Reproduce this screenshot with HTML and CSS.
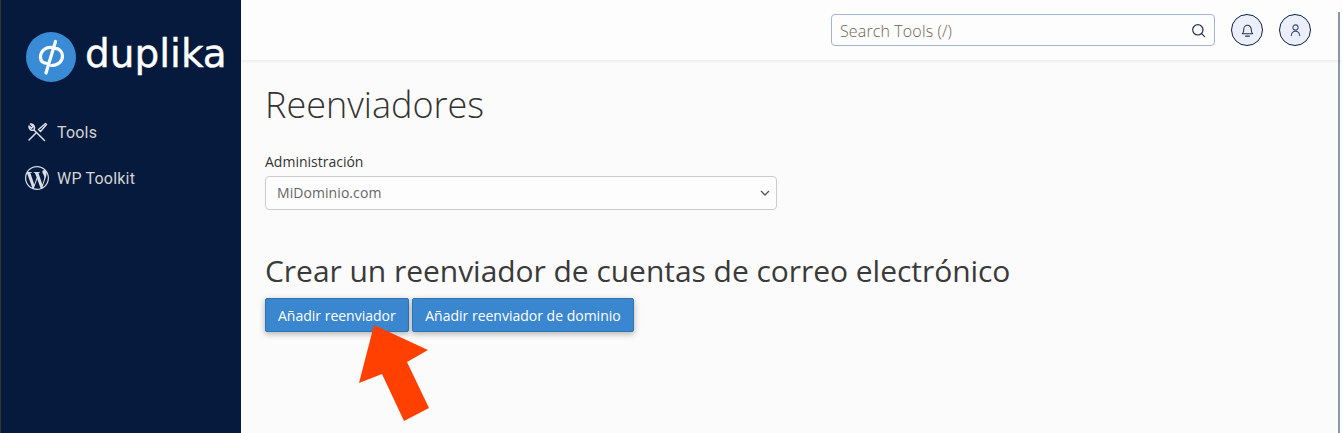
FILE: index.html
```html
<!DOCTYPE html>
<html lang="es">
<head>
  <meta charset="UTF-8" />
  <title>Reenviadores</title>
  <link rel="stylesheet" href="styles.css">
</head>
<body>
  <aside class="sidebar">
    <div class="logo">
      <svg class="logo-mark" viewBox="0 0 50 50" width="50" height="50">
        <circle cx="25" cy="25" r="25" fill="#3a8bd6"/>
        <path d="M26 15.500C19 14.500 14.500 19.500 14.500 25c0 4 2.500 6.500 7.500 6.500M28 16.500c5-.5 8.500 3 8.500 7.500 0 5.500-4.500 9.500-11 9.500" fill="none" stroke="#fff" stroke-width="3.200" stroke-linecap="round"/>
        <path d="M29.500 9.500 20 41" fill="none" stroke="#fff" stroke-width="3.200" stroke-linecap="round"/>
      </svg>
      <span class="logo-text">duplika</span>
    </div>
    <nav class="side-nav">
      <a href="#" class="side-link">
        <svg class="side-icon" viewBox="0 0 24 24" width="24" height="24" fill="none" stroke="#d8dde6" stroke-width="1.500" stroke-linecap="round" stroke-linejoin="round">
          <path d="M19.500 20.500 9.500 10.500"/>
          <path d="M4 6C3.500 8.500 6 11 9 10.200 10.500 7 8.500 3.500 5.500 4L8 6.800 6.500 8.200z"/>
          <path d="M20.500 3.500l1 1-6 7-2-2z"/>
          <path d="M11 13 4 20"/>
        </svg>
        <span>Tools</span>
      </a>
      <a href="#" class="side-link">
        <svg class="side-icon" viewBox="0 0 24 24" width="24" height="24" fill="#d8dde6">
          <path d="M21.469 6.825c.84 1.537 1.318 3.3 1.318 5.175 0 3.979-2.156 7.456-5.363 9.325l3.295-9.527c.615-1.54.82-2.771.82-3.864 0-.405-.026-.78-.07-1.11m-7.981.105c.647-.03 1.232-.105 1.232-.105.582-.075.514-.93-.067-.899 0 0-1.755.135-2.88.135-1.064 0-2.85-.15-2.85-.15-.585-.03-.661.855-.075.885 0 0 .54.061 1.125.09l1.68 4.605-2.37 7.08L5.354 6.9c.649-.03 1.234-.1 1.234-.1.585-.075.516-.93-.065-.896 0 0-1.746.138-2.874.138-.2 0-.438-.008-.69-.015C4.911 3.15 8.235 1.215 12 1.215c2.809 0 5.365 1.072 7.286 2.833-.046-.003-.091-.009-.141-.009-1.06 0-1.812.923-1.812 1.914 0 .89.513 1.643 1.06 2.531.411.72.89 1.643.89 2.977 0 .915-.354 1.994-.821 3.479l-1.075 3.585-3.9-11.61.001.014zM12 22.784c-1.059 0-2.081-.153-3.048-.437l3.237-9.406 3.315 9.087c.024.053.05.101.078.149-1.12.393-2.325.609-3.582.609M1.211 12c0-1.564.336-3.05.935-4.39L7.29 21.709C3.694 19.96 1.212 16.271 1.211 12M12 0C5.385 0 0 5.385 0 12s5.385 12 12 12 12-5.385 12-12S18.615 0 12 0"/>
        </svg>
        <span>WP Toolkit</span>
      </a>
    </nav>
  </aside>

  <div class="page">
    <header class="topbar">
      <div class="search">
        <span class="search-text">Search Tools (/)</span>
        <svg viewBox="0 0 16 16" width="15" height="15" fill="none" stroke="#26324a" stroke-width="1.300" stroke-linecap="round">
          <circle cx="7.300" cy="7.300" r="5.500"/>
          <path d="m11.300 11.300 3.200 3.200"/>
        </svg>
      </div>
      <button class="round-btn">
        <svg viewBox="0 0 16 16" width="15" height="15" fill="none" stroke="#26324a" stroke-width="1.100" stroke-linecap="round" stroke-linejoin="round">
          <path d="M2.500 11.500h11c-1-1-1.500-1.800-1.500-4.500 0-2.500-1.700-4.500-4-4.500S4 4.500 4 7c0 2.700-.5 3.500-1.500 4.500z"/>
          <path d="M6 14h4"/>
        </svg>
      </button>
      <button class="round-btn">
        <svg viewBox="0 0 16 16" width="15" height="15" fill="none" stroke="#3c4a66" stroke-width="1.100" stroke-linecap="round">
          <circle cx="8" cy="4.800" r="2.800"/>
          <path d="M3.500 13.500c.3-2.800 2-4.800 4.500-4.800s4.200 2 4.500 4.800"/>
        </svg>
      </button>
    </header>

    <main class="content">
      <h1>Reenviadores</h1>
      <label class="field-label">Administración</label>
      <div class="select-box">
        <span class="select-text">MiDominio.com</span>
        <svg viewBox="0 0 10 6" width="10" height="6" fill="none" stroke="#555" stroke-width="1.300"><path d="m1 1 4 4 4-4"/></svg>
      </div>
      <h2>Crear un reenviador de cuentas de correo electrónico</h2>
      <div class="actions">
        <button class="btn">Añadir reenviador</button>
        <button class="btn">Añadir reenviador de dominio</button>
      </div>
    </main>
  </div>

  <div class="edge-line"></div>

  <!-- annotation arrow pasted over the screenshot -->
  <svg class="arrow" viewBox="0 0 72 98" width="72" height="98">
    <path d="M16 1 70 26 49 38 71 84 46 97 24 50 1 59z" fill="#ff4000"/>
  </svg>
</body>
</html>
```

FILE: styles.css
```css
* { box-sizing: border-box; margin: 0; padding: 0; }
html, body { height: 100%; }
body {
  display: flex;
  overflow: hidden;
  position: relative;
  font-family: 'Open Sans', sans-serif;
  background: #fbfbfb;
  color: #333;
}
.sidebar {
  width: 241px;
  flex-shrink: 0;
  background: #051a3d;
  border-left: 1px solid #33332f;
  padding: 32px 0 0 25px;
}
.logo {
  display: flex;
  align-items: flex-start;
  gap: 9px;
}
.logo-mark { flex-shrink: 0; }
.logo-text {
  font-family: 'DejaVu Sans', sans-serif;
  font-size: 39px;
  line-height: 50px;
  margin-top: -3px;
  color: #fff;
  -webkit-text-stroke: 0.4px #fff;
}
.side-nav {
  margin: 38px 0 0 -1px;
  display: flex;
  flex-direction: column;
  gap: 22px;
}
.side-link {
  display: flex;
  align-items: center;
  gap: 8px;
  height: 24px;
  color: #d4d4d4;
  text-decoration: none;
  font-family: 'Roboto', sans-serif;
  font-size: 16px;
  font-weight: 400;
  letter-spacing: 0.2px;
}
.page {
  flex: 1;
  display: flex;
  flex-direction: column;
  min-width: 0;
}
.topbar {
  height: 60px;
  flex-shrink: 0;
  display: flex;
  align-items: center;
  justify-content: flex-end;
  gap: 16px;
  padding: 0 31px 0 0;
  background: #fdfdfd;
  box-shadow: 0 2px 2px rgba(0,0,0,0.05);
}
.search {
  width: 384px;
  height: 32px;
  padding: 0 8px;
  display: flex;
  align-items: center;
  justify-content: space-between;
  border: 1px solid #a4b4d0;
  border-radius: 4px;
}
.search-text {
  margin-top: 2px;
  font-size: 16px;
  font-weight: 300;
  letter-spacing: 0.13px;
  color: #6c6458;
}
.round-btn {
  width: 32px;
  height: 32px;
  border-radius: 50%;
  border: 1px solid #0e1f47;
  background: #ebeffb;
  display: flex;
  align-items: center;
  justify-content: center;
}
.content {
  padding: 21px 24px 0 24px;
}
h1 {
  font-size: 36px;
  font-weight: 300;
  line-height: 48px;
  color: #333;
}
.field-label {
  display: block;
  margin-top: 23px;
  font-size: 14px;
  line-height: 20px;
  color: #333;
}
.select-box {
  width: 512px;
  height: 34px;
  margin-top: 4px;
  padding: 0 6px 0 11px;
  display: flex;
  align-items: center;
  justify-content: space-between;
  border: 1px solid #ccc;
  border-radius: 4px;
  background: #fdfdfd;
  font-size: 14px;
  color: #666;
}
.select-text {
  margin-bottom: 2px;
  letter-spacing: 0.07px;
}
h2 {
  margin-top: 41px;
  font-size: 30px;
  font-weight: 400;
  line-height: 40px;
  letter-spacing: -0.04px;
  color: #3a3a3a;
}
.actions {
  margin-top: 7px;
  display: flex;
  gap: 3px;
}
.btn {
  height: 34px;
  padding: 0 12px;
  background: #3a87d0;
  border: 1px solid #2f74b5;
  border-radius: 2px;
  color: #fff;
  font-family: 'Open Sans', sans-serif;
  font-size: 14px;
  box-shadow: 0 2px 6px rgba(0,0,0,0.3);
}
.btn + .btn { padding: 0 12.5px; }
.edge-line {
  position: absolute;
  top: 12px;
  bottom: 0;
  right: 2px;
  width: 2px;
  background: #8a96a3;
}
.arrow {
  position: absolute;
  left: 358px;
  top: 324px;
}
```
